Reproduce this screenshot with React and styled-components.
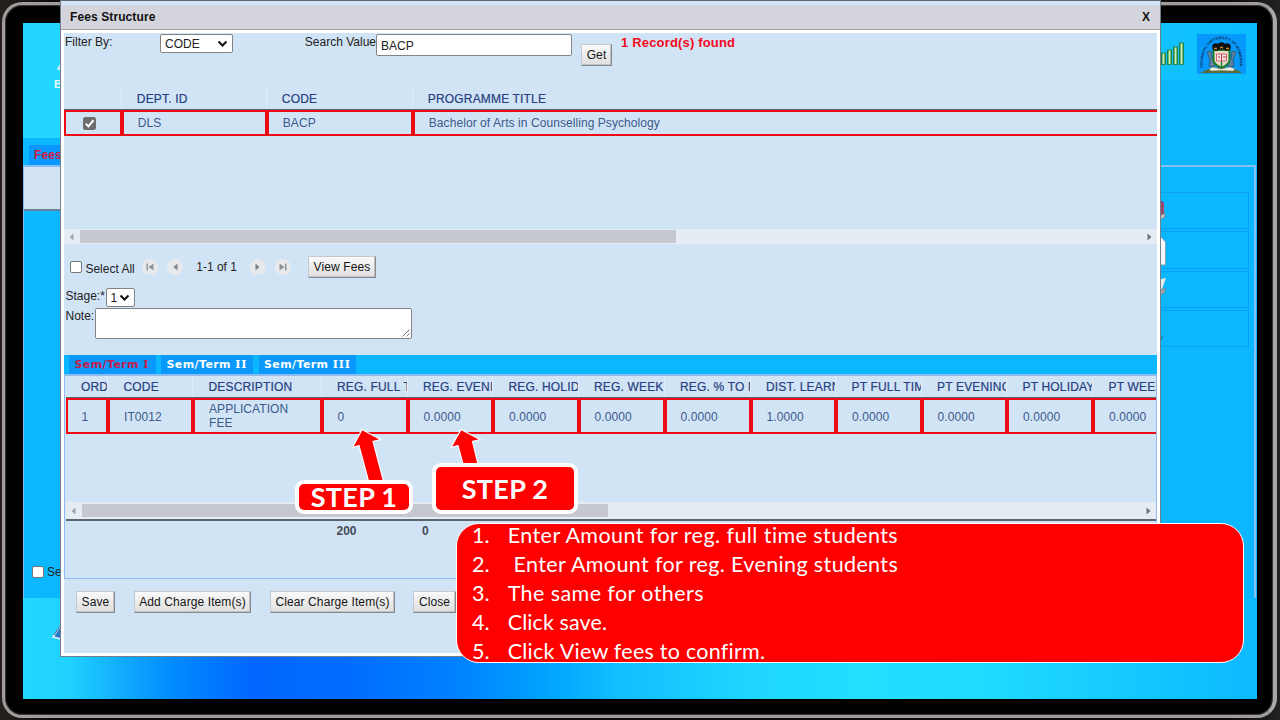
import React from "react";
import styled, { createGlobalStyle } from "styled-components";

const Global = createGlobalStyle`
  * { box-sizing: border-box; }
  body { margin: 0; background: #1b1b1b; font-family: "Liberation Sans", Arial, sans-serif; font-size: 12px; color: #222; }
  #root { width: 1280px; height: 720px; overflow: hidden; }
`;

const Stage = styled.div`
  position: relative;
  width: 1280px;
  height: 720px;
  overflow: hidden;
  background: linear-gradient(90deg, #26211f, #0c0c0c 4%, #0c0c0c 96%, #222);
  padding: 2px 3px 2px 2px;
`;

const Bezel = styled.div`
  height: 716px;
  padding: 18px 16px 15px 18px;
  background: #000;
  border: 3px solid #a19b9c;
  border-right: 4px solid #aaa7a8;
  border-radius: 20px;
  box-shadow: inset 0 0 1px 1px #3c3c3c;
`;

const Desktop = styled.div`
  width: 1234px;
  height: 676px;
  display: flex;
  flex-direction: column;
  overflow: hidden;
  background: #0bb8ff;
`;

const Banner = styled.div`
  height: 115px;
  display: flex;
  justify-content: space-between;
  background: linear-gradient(90deg, #22d6ff 0 37px, #0bb8ff 60px);
`;

const BrandEdge = styled.div`
  padding: 37px 0 0 31px;
  color: #e8faff;
  font-size: 11px;
  font-weight: bold;
  line-height: 16px;
`;

const BrandMark = styled.svg`
  display: block;
  margin: 0 0 0 3px;
`;

const BannerRight = styled.div`
  width: 97px;
  height: 57px;
  padding: 11px 11px 0 0;
  display: flex;
  justify-content: flex-end;
  gap: 13px;
  background: linear-gradient(90deg, #13c3ff, #0abbff);

  svg { flex: none; }
`;

const TabStrip = styled.div`
  height: 27px;
  padding: 7px 0 0 6px;
`;

const BackTab = styled.div`
  width: 80px;
  height: 20px;
  padding-left: 5px;
  background: #0a98ff;
  color: #d5183b;
  font-weight: bold;
  line-height: 21px;
  letter-spacing: 0.1px;
`;

const Workspace = styled.div`
  height: 433px;
  margin-right: 1px;
  display: flex;
  justify-content: space-between;
  border: 2px solid #86bff5;
  border-bottom: 0;
  border-left-width: 1px;
`;

const LeftPane = styled.div`
  width: 80px;
`;

const PaneHead = styled.div`
  height: 44px;
  background: #d1e2f2;
  border-bottom: 2px solid #668394;
`;

const BackSelect = styled.div`
  display: flex;
  align-items: center;
  gap: 3px;
  padding: 354px 0 0 8px;
`;

const RightPane = styled.div`
  width: 120px;
  padding: 25px 5px 0 0;
  display: flex;
  flex-direction: column;
  gap: 2px;
`;

const SideBox = styled.div`
  height: 37.3px;
  border: 1px solid #0a9ff8;
  padding: 4px 0 0 16px;
`;

const Taskbar = styled.div`
  flex: 1;
  padding: 22px 0 0 28px;
  background: linear-gradient(90deg, #22d8ff 0, #20d2ff 45px, #10a8ff 105px, #0088ff 155px, #0066ff 230px, #006cff 320px, #0080ff 430px, #00a0ff 515px, #12c0ff 600px, #20d8ff 740px, #22deff 830px, #22dcff 950px, #16ccff 1080px, #0cbaff 1234px);
`;

const Modal = styled.section`
  position: absolute;
  left: 60px;
  top: 0;
  width: 1101px;
  height: 657px;
  border: 1px solid #72808c;
  border-top-color: #5c6677;
  background: #fff;
  display: flex;
  flex-direction: column;
`;

const TitleBar = styled.header`
  height: 29px;
  padding: 4px 10px 0 9px;
  display: flex;
  justify-content: space-between;
  align-items: center;
  background: linear-gradient(#d5e5f8 0 4px, #d4d5dc 4px);
  border-bottom: 1px solid #a3a5ad;
  color: #111;
  font-weight: bold;
  letter-spacing: 0.1px;
`;

const Body = styled.div`
  margin: 3px;
  height: 620px;
  background: #d1e4f5;
  display: flex;
  flex-direction: column;
`;

const FilterRow = styled.div`
  height: 55px;
  padding: 1px 0 0 1px;
  display: flex;
  align-items: flex-start;
`;

const Label = styled.span`
  width: ${(p) => p.$w || "auto"};
  margin-top: ${(p) => p.$top || 0}px;
  margin-left: ${(p) => p.$ml || 0}px;
  text-align: ${(p) => p.$align || "left"};
  line-height: 16px;
  white-space: nowrap;
`;

const SelectBox = styled.div`
  width: ${(p) => p.$w}px;
  height: 19px;
  padding: 0 4px;
  display: flex;
  align-items: center;
  justify-content: space-between;
  background: #fff;
  border: 1px solid #828282;
  border-radius: 2px;
`;

const Field = styled.div`
  width: 196px;
  height: 22px;
  padding-left: 4px;
  border: 1px solid #858585;
  border-radius: 2px;
  background: #fff;
  line-height: 22px;
`;

const Button = styled.button`
  width: ${(p) => p.$w}px;
  height: 22px;
  padding: 0;
  margin: ${(p) => p.$m || 0};
  border: 1px solid;
  border-color: #c5c9cd #858a8e #858a8e #c5c9cd;
  box-shadow: inset -1px -1px #c2c2c2;
  background: linear-gradient(#fafafa, #dedede);
  color: #151515;
  font: 12px "Liberation Sans", Arial, sans-serif;
  letter-spacing: 0.1px;
  white-space: nowrap;
  flex: none;
`;

const Found = styled.span`
  margin: 1px 0 0 9px;
  color: #f5091c;
  font-weight: bold;
  font-size: 13px;
  line-height: 16px;
  letter-spacing: 0.17px;
`;

const HeadRow = styled.div`
  height: 22px;
  display: flex;
  overflow: hidden;
  border-bottom: 1px solid #5d6971;
`;

const HeadCell = styled.div`
  width: ${(p) => p.$w}px;
  flex: none;
  padding-left: ${(p) => p.$pad || 15}px;
  border-right: 1px solid #e3edf7;
  color: #27407f;
  line-height: 22px;
  letter-spacing: 0.17px;
  -webkit-text-stroke: 0.2px #27407f;
  white-space: nowrap;
  overflow: hidden;
`;

const DataRow = styled.div`
  height: ${(p) => p.$h}px;
  display: flex;
  overflow: hidden;
`;

const DataCell = styled.div`
  width: ${(p) => p.$w}px;
  flex: none;
  padding: ${(p) => p.$pt ?? 1}px ${(p) => p.$pr || 0}px 0 ${(p) => p.$pad || 14}px;
  display: flex;
  align-items: center;
  border: 2px solid #ee0c14;
  color: #3c5a8c;
  line-height: 14px;
  letter-spacing: 0.07px;
`;

const ScrollTrack = styled.div`
  height: ${(p) => p.$h}px;
  margin-top: ${(p) => p.$top}px;
  padding: 2px 5px 2px 5px;
  display: flex;
  align-items: center;
  background: #e6ecf3;
`;

const Thumb = styled.div`
  width: ${(p) => p.$w}px;
  height: 12.5px;
  margin: 0 auto 0 6px;
  background: #c5c9cf;
`;

const Pager = styled.div`
  height: 24px;
  margin-top: 11px;
  padding-left: 6.4px;
  display: flex;
  align-items: center;
`;

const Check = styled.span`
  width: 12px;
  height: 12px;
  flex: none;
  background: #fff;
  border: 1px solid #777;
  border-radius: 2px;
`;

const Round = styled.span`
  width: 16px;
  height: 16px;
  margin-left: ${(p) => p.$ml}px;
  display: flex;
  align-items: center;
  justify-content: center;
  border-radius: 50%;
  background: #e8e9ed;
`;

const StageRow = styled.div`
  height: 20px;
  margin-top: 9px;
  padding-left: 1.5px;
  display: flex;
  align-items: flex-start;
`;

const NoteRow = styled.div`
  height: 47px;
  padding-left: 1.5px;
  display: flex;
  align-items: flex-start;
`;

const NoteBox = styled.div`
  width: 317.5px;
  height: 31px;
  display: flex;
  align-items: flex-end;
  justify-content: flex-end;
  padding: 1px;
  border: 1px solid #858585;
  border-radius: 2px;
  background: #fff;
`;

const Tabs = styled.nav`
  height: 19px;
  padding-left: 5px;
  display: flex;
  gap: 5.5px;
  background: #0bb8ff;
`;

const Tab = styled.div`
  width: ${(p) => p.$w}px;
  padding-left: 5.5px;
  background: #0a98fa;
  color: ${(p) => (p.$active ? "#c41d4b" : "#fff")};
  font: bold 11px/19px Verdana, "DejaVu Sans", sans-serif;
  letter-spacing: 0.4px;
  white-space: nowrap;
`;

const Numeral = styled.span`
  font-family: Verdana, "DejaVu Serif", serif;
  letter-spacing: 0.9px;
`;

const FeesPanel = styled.div`
  height: 205px;
  border: 1px solid #8ebcf0;
  border-top-width: 2px;
  padding: 0 0 0 0.5px;
`;

const Totals = styled.div`
  height: 24px;
  padding: 1px 0 0 271px;
  display: flex;
  border-top: 2px solid #5c6670;
  color: #444c57;
  font-weight: bold;
  line-height: 19px;
`;

const Total = styled.span`
  width: 85.5px;
`;

const Actions = styled.footer`
  height: 36px;
  padding: 12.4px 0 0 12px;
  display: flex;
`;

const Callout = styled.div`
  position: absolute;
  left: ${(p) => p.$x}px;
  top: ${(p) => p.$y}px;
  width: ${(p) => p.$w}px;
  height: ${(p) => p.$h}px;
  border: 4px solid #fff;
  border-radius: 9px;
  background: #fe0000;
  color: #fff;
  text-align: center;
  font: bold 27px/${(p) => p.$h - 8}px Lato, "Open Sans", sans-serif;
  letter-spacing: 0.3px;
  white-space: nowrap;
`;

const Arrows = styled.svg`
  position: absolute;
  left: 340px;
  top: 420px;
`;

const Instructions = styled.ol`
  position: absolute;
  left: 456px;
  top: 523px;
  width: 788px;
  height: 140px;
  margin: 0;
  padding: 0 0 0 15px;
  list-style: none;
  border: 1px solid #fff;
  border-radius: 23px;
  background: #fe0000;
  color: #fff;
  font: 21.5px/29px Lato, "Open Sans", sans-serif;
  font-variant-ligatures: none;
`;

const Step = styled.li`
  height: 28.9px;
  position: relative;
  top: -3px;
  display: flex;
  white-space: pre;
  letter-spacing: ${(p) => p.$ls || 0}px;
`;

const StepNo = styled.span`
  width: 35.7px;
  letter-spacing: 0;
`;

const Chevron = () => (
  <svg width="11" height="8" viewBox="0 0 11 8"><path d="M1.5 1.5 5.5 5.5 9.5 1.5" fill="none" stroke="#111" strokeWidth="2" /></svg>
);

const Tri = ({ dir, color }) => (
  <svg width="5" height="8" viewBox="0 0 5 8"><path d={dir === "left" ? "M4.5 .5v7L.5 4z" : "M.5 .5v7L4.5 4z"} fill={color} /></svg>
);

const EndTri = ({ dir }) => (
  <svg width="8" height="8" viewBox="0 0 8 8">
    <path d={dir === "left" ? "M.5 .5H2v7H.5zM7.5 .5v7L2.5 4z" : "M7.5 .5H6v7h1.5zM.5 .5v7L5.500 4z"} fill="#8f949a" />
  </svg>
);

const Signal = () => (
  <svg width="26" height="31" viewBox="0 0 26 31">
    <defs><linearGradient id="bar"><stop offset="0" stopColor="#1d7a35" /><stop offset=".5" stopColor="#c5efb8" /><stop offset="1" stopColor="#2a8a2c" /></linearGradient></defs>
    {[[-2, 22], [3, 19], [9, 16], [15, 13], [21, 9]].map(([x, y]) => (
      <rect key={x} x={x + 0.5} y={y} width="4" height={30.5 - y} fill="url(#bar)" stroke="#20793b" strokeWidth=".8" />
    ))}
  </svg>
);

const Crest = () => (
  <svg width="49" height="40" viewBox="0 0 49 40">
    <defs><path id="arc" d="M6.500 35C1 -5 48 -5 42.500 35" /></defs>
    <rect width="49" height="40" fill="#0798fb" />
    <text fontSize="3.800" fontWeight="bold" fill="#083157" fontFamily="Liberation Sans"><textPath href="#arc" startOffset="1" textLength="76">TECHNICAL UNIVERSITY OF MOMBASA</textPath></text>
    <path d="M4 39c7-7 34-7 41 0z" fill="#5d6c33" />
    <path d="M10 18l4-1 1 8 4 3-2 5-5-1 1-6zM39 18l-4-1-1 8-4 3 2 5 5-1-1-6z" fill="#5d7fa0" stroke="#26506e" strokeWidth=".7" />
    <path d="M16.500 16h16v10c0 4-4 6-8 8-4-2-8-4-8-8z" fill="#e9dcc9" stroke="#1e7a2c" strokeWidth="2" />
    <path d="M19.500 20h10v7h-10z" fill="#f3dede" stroke="#c34b58" strokeWidth=".8" />
    <path d="M24.500 20v8M21 23h2M26 23h3" stroke="#b53d4f" />
    <path d="M24.500 28v5" stroke="#1e7a2c" strokeWidth="1.500" />
    <circle cx="19" cy="13" r="3.800" fill="#111" /><circle cx="24.500" cy="12" r="3.800" fill="#111" /><circle cx="30" cy="13" r="3.800" fill="#111" />
    <path d="M17 14.500h3M23 13.500h3M29 14.500h3" stroke="#c58b24" strokeWidth="1.500" />
    <path d="M12 35l4-2 8 2 9-2 5 2-2 2-12-.5L14 37z" fill="#eef0df" stroke="#666" strokeWidth=".4" />
  </svg>
);

const Checked = () => (
  <svg width="13" height="13" viewBox="0 0 12 12"><rect width="12" height="12" rx="2" fill="#6d6d6d" /><path d="M2.500 6.200 5 8.600 9.700 3" fill="none" stroke="#fff" strokeWidth="1.900" /></svg>
);

const SideArt = ({ kind }) => (
  <svg width="16" height="32" viewBox="0 0 16 32">
    {kind === 0 && <><path d="M8 4h4v13H8z" fill="#5d4a8c" /><path d="M10 5l3 1v11l-3 3z" fill="#a1486c" /><path d="M6 20l8-4v4l-7 4z" fill="#b9bfc7" stroke="#66707c" strokeWidth=".6" /></>}
    {kind === 1 && <path d="M5 1h5l4.500 5v23H5z" fill="#f7f9fb" stroke="#7b97a9" strokeWidth=".8" />}
    {kind === 2 && <><path d="M6 4l9-2-4 11-5 3z" fill="#e7e8e8" /><path d="M6 16l8-4v4l-8 5z" fill="#aaa3a3" stroke="#6b7883" strokeWidth=".7" /></>}
    {kind === 3 && <path d="M7 24l6-4-2 5-4 2z" fill="#0d89bd" />}
  </svg>
);

const FEES = [
  ["ORD", "1", 42.5],
  ["CODE", "IT0012", 85],
  ["DESCRIPTION", "APPLICATION FEE", 128.5],
  ["REG. FULL TIME", "0", 86],
  ["REG. EVENING", "0.0000", 85.5],
  ["REG. HOLIDAY", "0.0000", 85.5],
  ["REG. WEEK", "0.0000", 86],
  ["REG. % TO P", "0.0000", 86],
  ["DIST. LEARN", "1.0000", 85.5],
  ["PT FULL TIME", "0.0000", 85.5],
  ["PT EVENING", "0.0000", 85.5],
  ["PT HOLIDAY", "0.0000", 86],
  ["PT WEEK", "0.0000", 86],
];

const PROGRAMMES = [
  ["DEPT. ID", "DLS", 145],
  ["CODE", "BACP", 146],
  ["PROGRAMME TITLE", "Bachelor of Arts in Counselling Psychology", 760],
];

const TERMS = [["I", 86.5], ["II", 92], ["III", 97.5]];

const STEPS = [
  ["Enter Amount for reg. full time students", 0.43],
  [" Enter Amount for reg. Evening students", 0.37],
  ["The same for others", 0.42],
  ["Click save.", 0.1],
  ["Click View fees to confirm.", 0.25],
];

export default function App() {
  return (
    <Stage>
      <Global />
      <Bezel>
        <Desktop>
          <Banner>
            <BrandEdge>
              <BrandMark width="6" height="16" viewBox="0 0 6 16"><path d="M5 2 1 9h5" fill="none" stroke="#dff8ff" strokeWidth="1.500" /></BrandMark>
              B
            </BrandEdge>
            <BannerRight><Signal /><Crest /></BannerRight>
          </Banner>
          <TabStrip><BackTab>Fees</BackTab></TabStrip>
          <Workspace>
            <LeftPane>
              <PaneHead />
              <BackSelect><Check />Se</BackSelect>
            </LeftPane>
            <RightPane>{[0, 1, 2, 3].map((k) => <SideBox key={k}><SideArt kind={k} /></SideBox>)}</RightPane>
          </Workspace>
          <Taskbar>
            <svg width="24" height="24" viewBox="0 0 24 24"><path d="M2 17 12 2l10 8v12z" fill="#2679c9" stroke="#e8f7ff" strokeWidth="1.500" /><path d="M3 15 12 2" stroke="#25568e" /></svg>
          </Taskbar>
        </Desktop>
      </Bezel>

      <Modal>
        <TitleBar><span>Fees Structure</span><span>X</span></TitleBar>
        <Body>
          <FilterRow>
            <Label $w="95px">Filter By:</Label>
            <SelectBox $w={73}>CODE<Chevron /></SelectBox>
            <Label $w="143px" $align="right">Search Value</Label>
            <Field>BACP</Field>
            <Button $w={31} $m="10px 0 0 9px">Get</Button>
            <Found>1 Record(s) found</Found>
          </FilterRow>

          <HeadRow>
            <HeadCell $w={58} />
            {PROGRAMMES.map(([h, , w]) => <HeadCell key={h} $w={w} $pad={14.8}>{h}</HeadCell>)}
          </HeadRow>
          <DataRow $h={26}>
            <DataCell $w={58} $pad={17}><Checked /></DataCell>
            {PROGRAMMES.map(([h, v, w]) => <DataCell key={h} $w={w} $pad={13.8} $pt={0}>{v}</DataCell>)}
          </DataRow>
          <ScrollTrack $h={15} $top={93}>
            <Tri dir="left" color="#a2a7ad" /><Thumb $w={595.5} /><Tri dir="right" color="#6c737b" />
          </ScrollTrack>

          <Pager>
            <Check /><Label $top={3} $ml={3}>Select All</Label>
            <Round $ml={7.5}><EndTri dir="left" /></Round>
            <Round $ml={9}><Tri dir="left" color="#7d838a" /></Round>
            <Label $ml={13}>1-1 of 1</Label>
            <Round $ml={13}><Tri dir="right" color="#7d838a" /></Round>
            <Round $ml={9}><EndTri dir="right" /></Round>
            <Button $w={68} $m="0 0 0 17px">View Fees</Button>
          </Pager>

          <StageRow><Label $w="40px">Stage:*</Label><SelectBox $w={29.5}>1<Chevron /></SelectBox></StageRow>
          <NoteRow>
            <Label $w="29px">Note:</Label>
            <NoteBox><svg width="8" height="8" viewBox="0 0 8 8"><path d="M.5 7.500 7.500 .5M4.500 7.500 7.500 4.500" stroke="#777" /></svg></NoteBox>
          </NoteRow>

          <Tabs>
            {TERMS.map(([n, w]) => <Tab key={n} $w={w} $active={n === "I"}>Sem/Term <Numeral>{n}</Numeral></Tab>)}
          </Tabs>
          <FeesPanel>
            <HeadRow>{FEES.map(([h, , w]) => <HeadCell key={h} $w={w} $pad={15.5}>{h}</HeadCell>)}</HeadRow>
            <DataRow $h={36}>{FEES.map(([h, v, w]) => <DataCell key={h} $w={w} $pt={h === "DESCRIPTION" ? 0 : 1} $pr={h === "DESCRIPTION" ? 20 : 0}>{v}</DataCell>)}</DataRow>
            <ScrollTrack $h={17} $top={68}>
              <Tri dir="left" color="#a2a7ad" /><Thumb $w={526} /><Tri dir="right" color="#6c737b" />
            </ScrollTrack>
            <Totals><Total>200</Total><Total>0</Total></Totals>
          </FeesPanel>
          <Actions>
            <Button $w={39}>Save</Button>
            <Button $w={117} $m="0 0 0 19px">Add Charge Item(s)</Button>
            <Button $w={125} $m="0 0 0 19px">Clear Charge Item(s)</Button>
            <Button $w={43} $m="0 0 0 18px">Close</Button>
          </Actions>
        </Body>
      </Modal>

      <Arrows width="150" height="70" viewBox="340 420 150 70">
        <path d="M362 429.500 380.500 439.500 373 441.500 384 483H369L359 445.500 352.500 447.500z" fill="#fe0000" stroke="#fff" strokeWidth="1.200" />
        <path d="M461 429.500 480 439.500 472.500 441.500 479 468H464L458 445.500 451 447.500z" fill="#fe0000" stroke="#fff" strokeWidth="1.200" />
      </Arrows>
      <Callout $x={295} $y={480} $w={118} $h={34}>STEP 1</Callout>
      <Callout $x={432} $y={463} $w={146} $h={51}>STEP 2</Callout>
      <Instructions>
        {STEPS.map(([t, ls], i) => <Step key={t} $ls={ls}><StepNo>{i + 1}.</StepNo><span>{t}</span></Step>)}
      </Instructions>
    </Stage>
  );
}
